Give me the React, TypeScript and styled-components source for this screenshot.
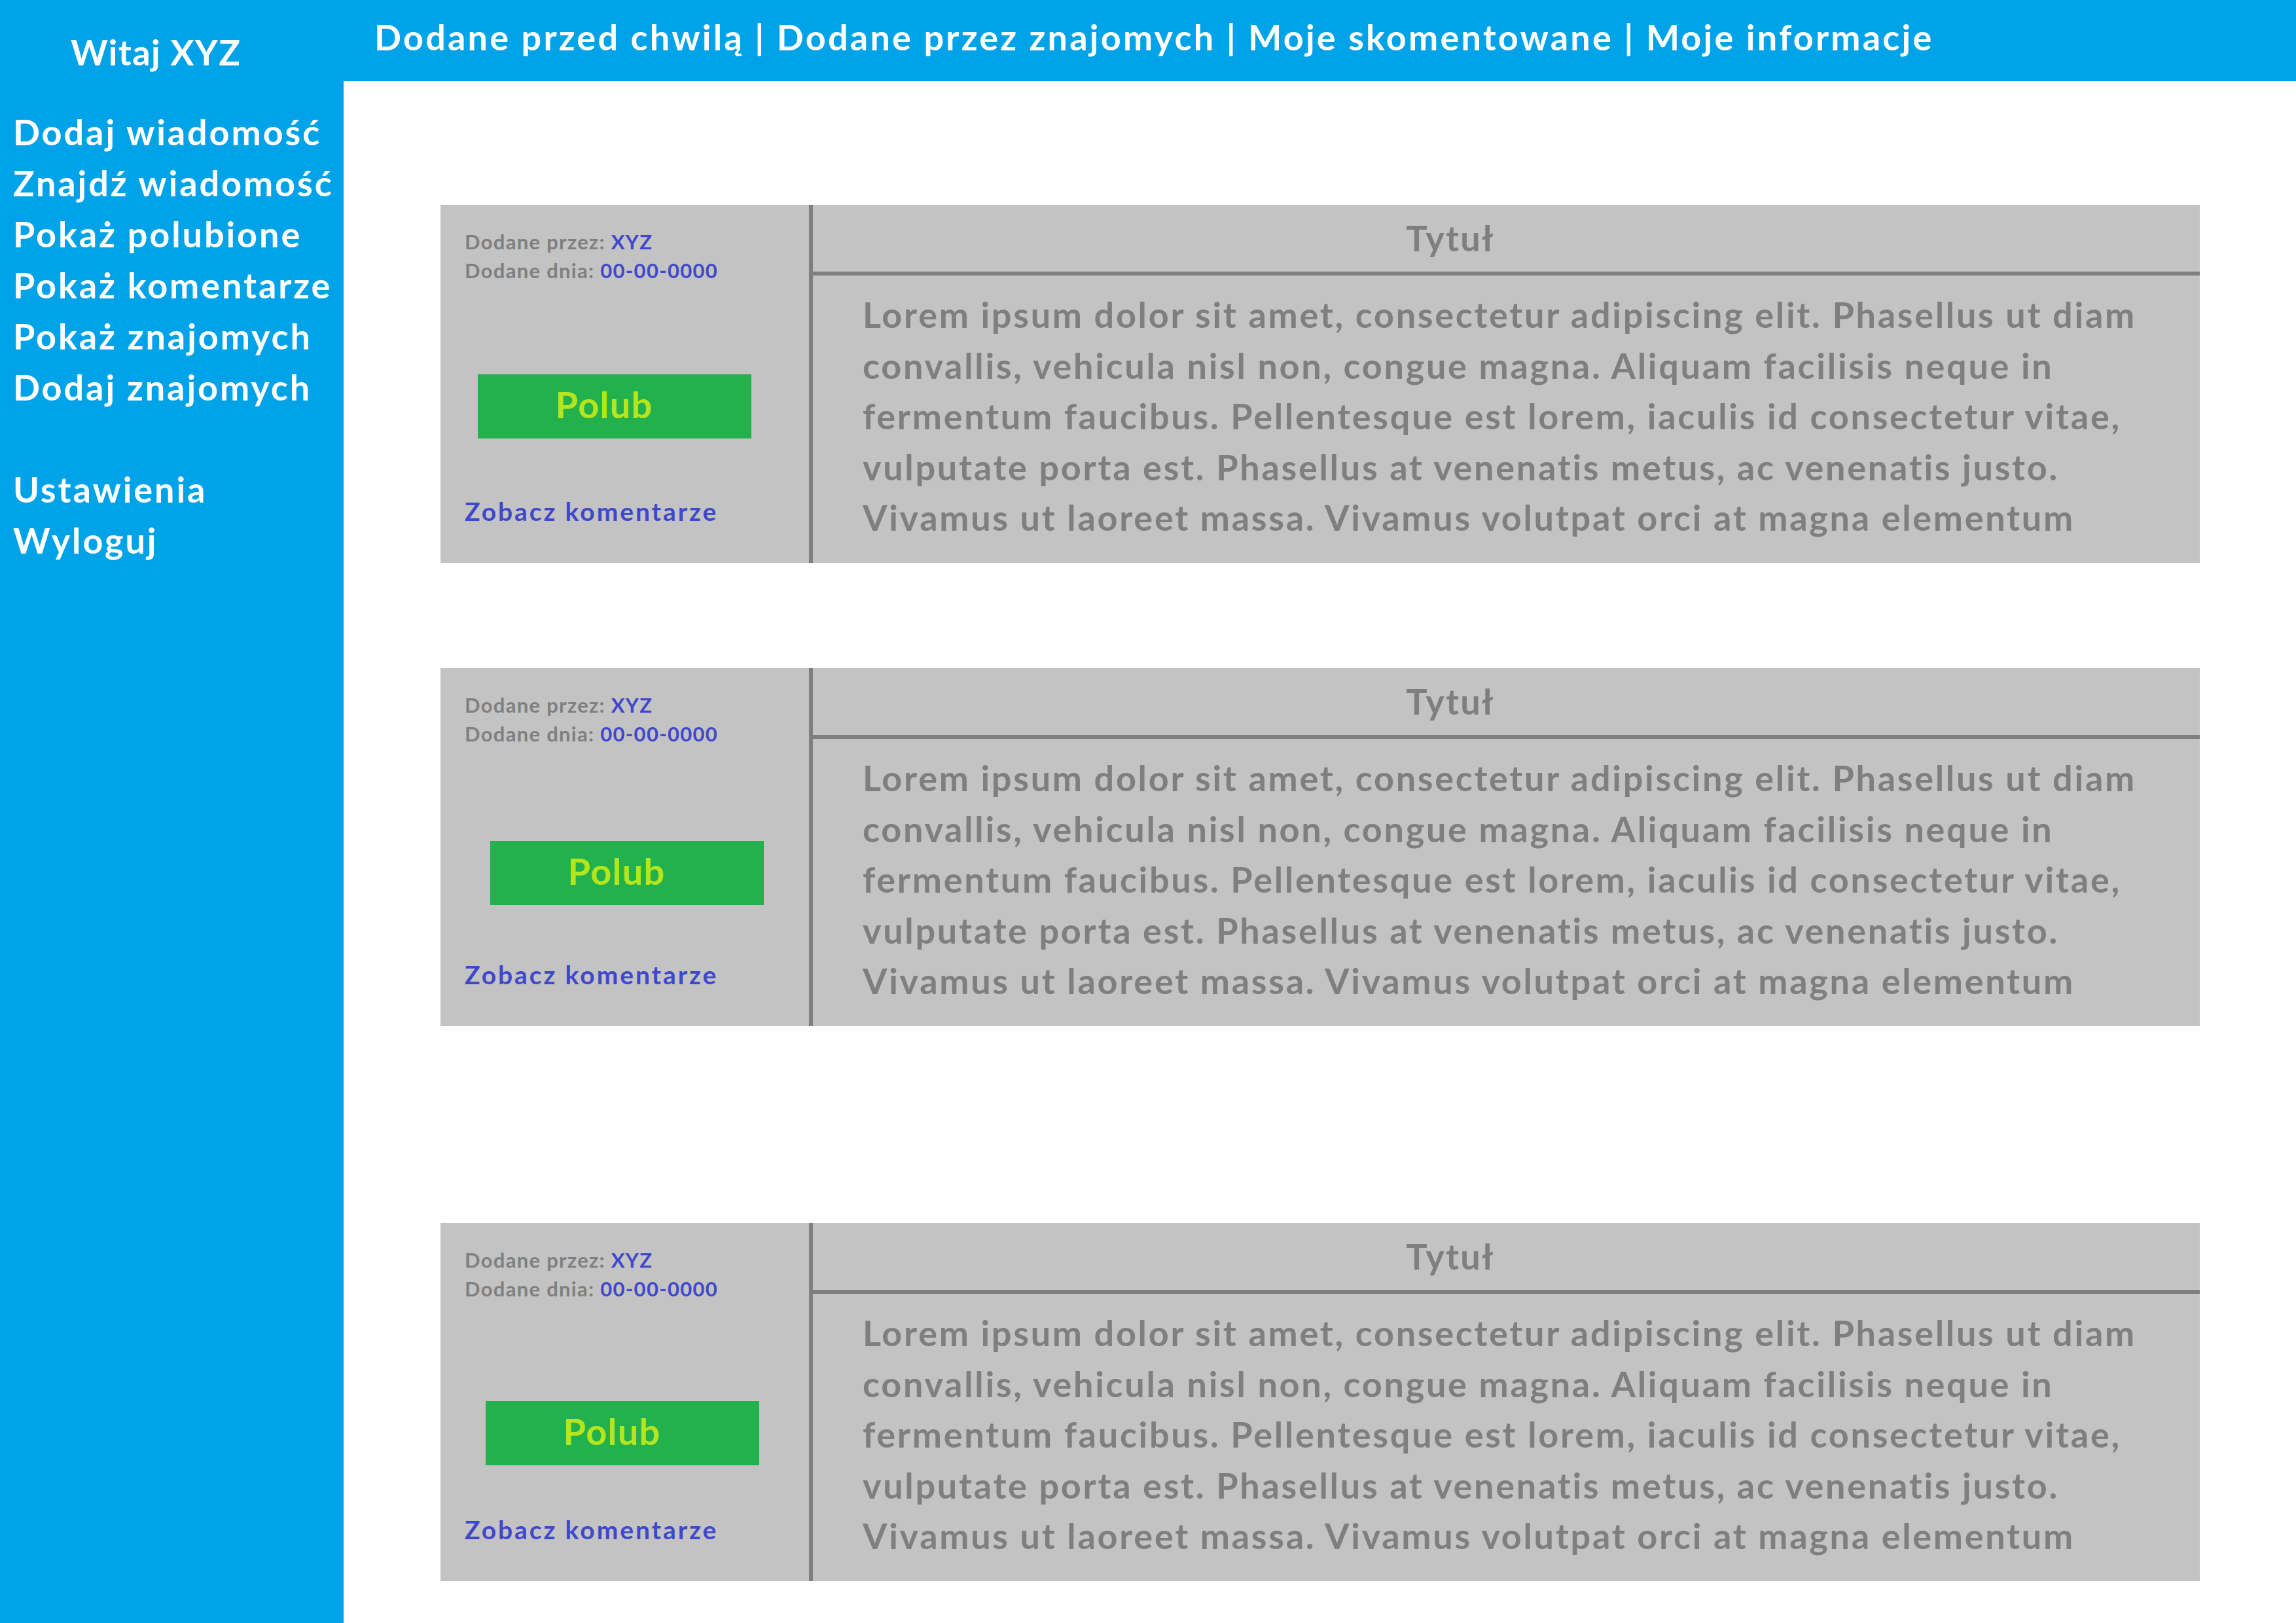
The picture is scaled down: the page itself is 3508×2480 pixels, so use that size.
import React from 'react';
import styled, { createGlobalStyle } from 'styled-components';

const GlobalStyle = createGlobalStyle`
  html, body {
    margin: 0;
    padding: 0;
    background: #ffffff;
  }
  body {
    font-family: Lato, "Open Sans", "Liberation Sans", sans-serif;
    font-weight: 700;
  }
  #root {
    width: 3508px;
    height: 2480px;
  }
`;

const Page = styled.div`
  display: flex;
  width: 3508px;
  height: 2480px;
  overflow: hidden;
`;

const Sidebar = styled.aside`
  width: 525px;
  flex: none;
  box-sizing: border-box;
  padding-top: 41px;
  background: #00a2e8;
  color: #ffffff;
`;

const Greeting = styled.div`
  padding-left: 108px;
  font-size: 54px;
  line-height: 78px;
  letter-spacing: 1.3px;
  white-space: nowrap;
`;

const Nav = styled.nav`
  display: flex;
  flex-direction: column;
  margin-top: 44px;
  padding-left: 20px;
`;

const NavItem = styled.a<{ $spaced?: boolean }>`
  margin-top: ${(p) => (p.$spaced ? '78px' : '0')};
  color: #ffffff;
  text-decoration: none;
  font-size: 54px;
  line-height: 78px;
  letter-spacing: 2.9px;
  white-space: nowrap;
`;

const Main = styled.main`
  flex: 1;
  display: flex;
  flex-direction: column;
  min-width: 0;
`;

const TopBar = styled.header`
  height: 124px;
  box-sizing: border-box;
  padding: 18px 0 0 47px;
  background: #00a2e8;
  color: #ffffff;
  font-size: 54px;
  line-height: 78px;
  letter-spacing: 3.2px;
  white-space: nowrap;
`;

const Feed = styled.section`
  display: flex;
  flex-direction: column;
  padding: 0 147px 0 148px;
`;

const Card = styled.article<{ $offset: number }>`
  display: flex;
  height: 547px;
  margin-top: ${(p) => p.$offset}px;
  background: #c3c3c3;
`;

const Aside = styled.div`
  width: 563px;
  flex: none;
  box-sizing: border-box;
  padding: 34px 0 0 37px;
  display: flex;
  flex-direction: column;
`;

const Meta = styled.div`
  color: #7f7f7f;
  font-size: 31px;
  line-height: 44px;
  letter-spacing: 1.3px;
  white-space: nowrap;
`;

const Accent = styled.span`
  color: #3f48cc;
`;

const ButtonSlot = styled.div`
  height: 321px;
  display: flex;
  align-items: flex-start;
`;

const LikeButton = styled.button<{ $dx: number; $dy: number }>`
  width: 418px;
  height: 98px;
  margin: ${(p) => 137 + p.$dy}px 0 0 ${(p) => 20 + p.$dx}px;
  padding: 0 32px 6px 0;
  display: flex;
  align-items: center;
  justify-content: center;
  border: none;
  background: #22b14c;
  color: #b5e61d;
  font-family: inherit;
  font-weight: 700;
  font-size: 56px;
  line-height: 1.2;
  letter-spacing: 1.2px;
  cursor: pointer;
`;

const CommentsLink = styled.a`
  color: #3f48cc;
  text-decoration: none;
  font-size: 39px;
  line-height: 50px;
  letter-spacing: 2.9px;
  white-space: nowrap;
`;

const Content = styled.div`
  flex: 1;
  min-width: 0;
  display: flex;
  flex-direction: column;
  border-left: 6px solid #7f7f7f;
`;

const Title = styled.h2`
  height: 108px;
  box-sizing: border-box;
  margin: 0;
  padding: 12px 171px 0 0;
  border-bottom: 6px solid #7f7f7f;
  color: #7f7f7f;
  text-align: center;
  font-size: 54px;
  font-weight: 700;
  line-height: 78px;
  letter-spacing: 2.2px;
`;

const Body = styled.div`
  padding: 21px 0 0 76px;
  color: #7f7f7f;
  font-size: 54px;
  line-height: 77.6px;
  letter-spacing: 2.7px;
`;

const BodyLine = styled.span`
  display: block;
  white-space: nowrap;
`;

const loremLines = [
  'Lorem ipsum dolor sit amet, consectetur adipiscing elit. Phasellus ut diam',
  'convallis, vehicula nisl non, congue magna. Aliquam facilisis neque in',
  'fermentum faucibus. Pellentesque est lorem, iaculis id consectetur vitae,',
  'vulputate porta est. Phasellus at venenatis metus, ac venenatis justo.',
  'Vivamus ut laoreet massa. Vivamus volutpat orci at magna elementum',
];

const posts = [
  { id: 1, offset: 189, dx: 0, dy: 0 },
  { id: 2, offset: 161, dx: 19, dy: 5 },
  { id: 3, offset: 301, dx: 12, dy: 13 },
];

const menu = [
  { label: 'Dodaj wiadomość' },
  { label: 'Znajdź wiadomość' },
  { label: 'Pokaż polubione' },
  { label: 'Pokaż komentarze' },
  { label: 'Pokaż znajomych' },
  { label: 'Dodaj znajomych' },
  { label: 'Ustawienia', spaced: true },
  { label: 'Wyloguj' },
];

export default function App() {
  return (
    <>
      <GlobalStyle />
      <Page>
        <Sidebar>
          <Greeting>Witaj XYZ</Greeting>
          <Nav>
            {menu.map((m) => (
              <NavItem key={m.label} $spaced={m.spaced}>
                {m.label}
              </NavItem>
            ))}
          </Nav>
        </Sidebar>
        <Main>
          <TopBar>
            Dodane przed chwilą | Dodane przez znajomych | Moje skomentowane | Moje informacje
          </TopBar>
          <Feed>
            {posts.map((p) => (
              <Card key={p.id} $offset={p.offset}>
                <Aside>
                  <Meta>
                    <div>
                      Dodane przez: <Accent>XYZ</Accent>
                    </div>
                    <div>
                      Dodane dnia: <Accent>00-00-0000</Accent>
                    </div>
                  </Meta>
                  <ButtonSlot>
                    <LikeButton $dx={p.dx} $dy={p.dy}>
                      Polub
                    </LikeButton>
                  </ButtonSlot>
                  <CommentsLink>Zobacz komentarze</CommentsLink>
                </Aside>
                <Content>
                  <Title>Tytuł</Title>
                  <Body>
                    {loremLines.map((l) => (
                      <BodyLine key={l}>{l}</BodyLine>
                    ))}
                  </Body>
                </Content>
              </Card>
            ))}
          </Feed>
        </Main>
      </Page>
    </>
  );
}
